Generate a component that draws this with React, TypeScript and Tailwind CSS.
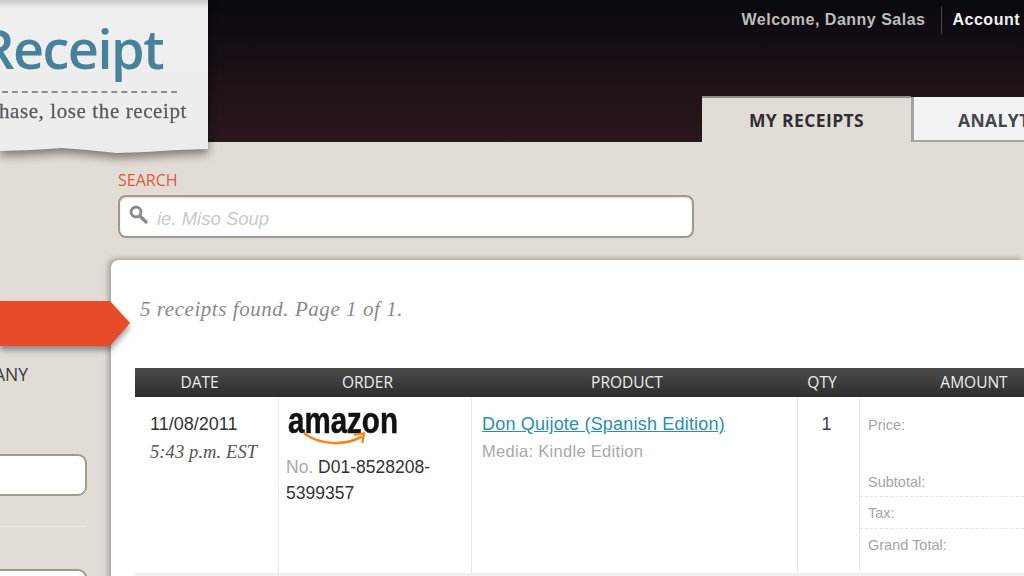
const columns = "grid grid-cols-[143px_193px_326px_62px_230px]";

function Logo() {
  return (
    <div className="absolute left-0 top-0 z-20 w-[208px] drop-shadow-[0_5px_5px_rgba(0,0,0,0.45)]">
      <div className="flex h-[158px] w-full flex-col bg-gradient-to-b from-[#c9c9c9] via-[#efefef] via-[5%] to-[#ececec] [clip-path:polygon(0_151px,15%_150px,30%_148px,42%_150px,56%_153px,70%_152px,85%_150px,100%_149px,100%_0,0_0)]">
        <div className="flex h-[84px] items-end justify-end overflow-hidden pr-[45px] font-['Open_Sans',sans-serif] text-[54px] leading-[72px] font-semibold tracking-[-1.5px] text-[#47829a]">
          <span className="whitespace-nowrap">Receipt</span>
        </div>
        <div className="mt-[7px] flex justify-end overflow-hidden pr-[31px]">
          <div className="w-[175px] border-t-2 border-dashed border-[#8b8f92]" />
        </div>
        <div className="mt-[6px] flex justify-end overflow-hidden pr-[21px] font-['Liberation_Serif',serif] text-[21px] leading-6 tracking-[0.6px] text-[#565d63] [-webkit-text-stroke:0.3px_#565d63]">
          <span className="whitespace-nowrap">hase, lose the receipt</span>
        </div>
      </div>
    </div>
  );
}

function Header() {
  return (
    <header className="flex h-[142px] shrink-0 flex-col bg-gradient-to-b from-[#0a0910] to-[#2a171d]">
      <div className="flex h-[38px] items-center justify-end pr-[4px] pt-[1px] font-['Liberation_Sans',sans-serif] text-[16px] font-bold tracking-[0.5px]">
        <span className="text-[#bdbdbd]">Welcome, Danny Salas</span>
        <span className="ml-[15px] mr-[11px] h-[28px] w-px bg-[#4a454a]" />
        <span className="text-[#f2f2f2]">Account</span>
      </div>
      <nav className="mt-auto flex pl-[702px] font-['Open_Sans',sans-serif] text-[17.5px] font-bold tracking-[0.4px]">
        <div className="flex h-[46px] w-[209px] shrink-0 items-center justify-center border-t-2 border-[#8e8c88] bg-[#e1dcd6] text-[#2f2f33]">
          MY RECEIPTS
        </div>
        <div className="mt-px flex h-[45px] w-[200px] shrink-0 items-center border-b-2 border-l-[3px] border-[#a3a3a3] bg-[#f3f3f6] pl-[44px] pt-[4px] text-[#46464a]">
          ANALYTICS
        </div>
      </nav>
    </header>
  );
}

function Sidebar() {
  return (
    <aside className="relative z-10 w-[111px] shrink-0 pt-[159px]">
      <div className="w-[130px] drop-shadow-[0_4px_3px_rgba(0,0,0,0.4)]">
        <div className="h-[45px] bg-[#e84b2a] [clip-path:polygon(0_0,110px_0,130px_22px,110px_45px,0_45px)]" />
      </div>
      <div className="mt-[16px] flex w-[28px] justify-end overflow-hidden font-['Open_Sans',sans-serif] text-[17.5px] leading-6 text-[#3a3a3a]">
        <span className="whitespace-nowrap">COMPANY</span>
      </div>
      <div className="mt-[68px] h-[42px] w-[87px] rounded-r-[9px] border-2 border-l-0 border-[#a09b92] bg-white" />
      <div className="mt-[30px] h-px w-[87px] bg-[#ebe8e3]" />
      <div className="mt-[42px] h-[42px] w-[87px] rounded-r-[9px] border-2 border-l-0 border-[#a09b92] bg-white" />
    </aside>
  );
}

function AmazonLogo() {
  return (
    <div className="relative h-[47px] w-[114px]">
      <span className="block origin-left scale-x-[0.82] whitespace-nowrap font-['Liberation_Sans',sans-serif] text-[36px] leading-[28px] font-bold text-[#111] [-webkit-text-stroke:0.5px_#111]">
        amazon
      </span>
      <svg className="absolute left-[16px] top-[24px]" width="66" height="16" viewBox="0 0 66 16" fill="none">
        <path d="M1 3C17 14 40 15 57 6" stroke="#ee8a1d" strokeWidth="2.6" strokeLinecap="round" />
        <path d="M51 3.5L60 2.5L58.5 11" stroke="#ee8a1d" strokeWidth="2.4" strokeLinecap="round" />
      </svg>
    </div>
  );
}

function AmountLine({ label, className }: { label: string; className: string }) {
  return <div className={`pl-[8px] text-[14.5px] text-[#a5a5a5] ${className}`}>{label}</div>;
}

function ReceiptTable() {
  return (
    <div className="mt-[45px] ml-[24px] w-[954px] font-['Liberation_Sans',sans-serif]">
      <div className={`${columns} h-[29px] items-center bg-gradient-to-b from-[#4d4d4d] to-[#2d2d2d] text-center font-['Open_Sans',sans-serif] text-[15.5px] text-[#ededed]`}>
        <div className="pr-[14px]">DATE</div>
        <div className="pr-[14px]">ORDER</div>
        <div className="pr-[14px]">PRODUCT</div>
        <div className="pr-[12px]">QTY</div>
        <div>AMOUNT</div>
      </div>
      <div className={`${columns} h-[180px] border-b-4 border-[#f0f0f0]`}>
        <div className="pl-[15px] pt-[15px]">
          <div className="text-[18px] leading-6 text-[#333]">11/08/2011</div>
          <div className="mt-[4px] font-['Liberation_Serif',serif] text-[18.5px] leading-6 italic tracking-[0.1px] text-[#555]">5:43 p.m. EST</div>
        </div>
        <div className="border-l border-[#e8e8e8] pl-[7px] pt-[10px]">
          <div className="pl-[2px]">
            <AmazonLogo />
          </div>
          <div className="text-[17.5px] leading-[26px] text-[#333]">
            <span className="text-[#aaa]">No.</span> D01-8528208-
            <br />
            5399357
          </div>
        </div>
        <div className="border-l border-[#e8e8e8] pl-[10px] pt-[15px]">
          <div className="text-[18px] leading-6 tracking-[0.2px] text-[#2a8db5] underline">Don Quijote (Spanish Edition)</div>
          <div className="mt-[3px] text-[16.5px] leading-6 tracking-[0.3px] text-[#a8a8a8]">Media: Kindle Edition</div>
        </div>
        <div className="border-l border-[#e8e8e8] pr-[4px] pt-[15px] text-center text-[18px] leading-6 text-[#3a3a55]">1</div>
        <div className="border-l border-[#e8e8e8] pt-[18px]">
          <AmountLine label="Price:" className="h-[57px]" />
          <AmountLine label="Subtotal:" className="h-[25px] border-b border-dashed border-[#e4e4e4]" />
          <AmountLine label="Tax:" className="h-[32px] border-b border-dashed border-[#e4e4e4] pt-[6px]" />
          <AmountLine label="Grand Total:" className="pt-[6px]" />
        </div>
      </div>
    </div>
  );
}

export default function App() {
  return (
    <div className="relative flex h-[576px] w-[1024px] flex-col overflow-hidden bg-[#e1dcd6]">
      <Logo />
      <Header />
      <div className="flex min-h-0 flex-1">
        <Sidebar />
        <main className="min-w-0 flex-1">
          <div className="pl-[7px] pt-[28px]">
            <div className="font-['Open_Sans',sans-serif] text-[16px] leading-5 text-[#e4573a]">SEARCH</div>
            <div className="mt-[5px] flex h-[43px] w-[576px] items-center rounded-[8px] border-2 border-[#a09888] bg-white pl-[9px] shadow-[inset_0_1px_2px_rgba(0,0,0,0.15)]">
              <svg className="mb-[5px]" width="19" height="19" viewBox="0 0 19 19" fill="none">
                <circle cx="7" cy="7" r="5" stroke="#8b8b8b" strokeWidth="2.8" />
                <path d="M11 11L17 17" stroke="#8b8b8b" strokeWidth="3.4" strokeLinecap="round" />
              </svg>
              <span className="ml-[9px] pt-[5px] font-['Liberation_Sans',sans-serif] text-[18.5px] italic text-[#c8c8c8]">ie. Miso Soup</span>
            </div>
          </div>
          <section className="mt-[22px] h-[400px] rounded-tl-[8px] bg-white pt-[35px] shadow-[-3px_-2px_5px_rgba(0,0,0,0.25)]">
            <p className="pl-[29px] font-['Liberation_Serif',serif] text-[21px] leading-[28px] italic tracking-[0.55px] text-[#8a8a8a]">
              5 receipts found. Page 1 of 1.
            </p>
            <ReceiptTable />
          </section>
        </main>
      </div>
    </div>
  );
}
